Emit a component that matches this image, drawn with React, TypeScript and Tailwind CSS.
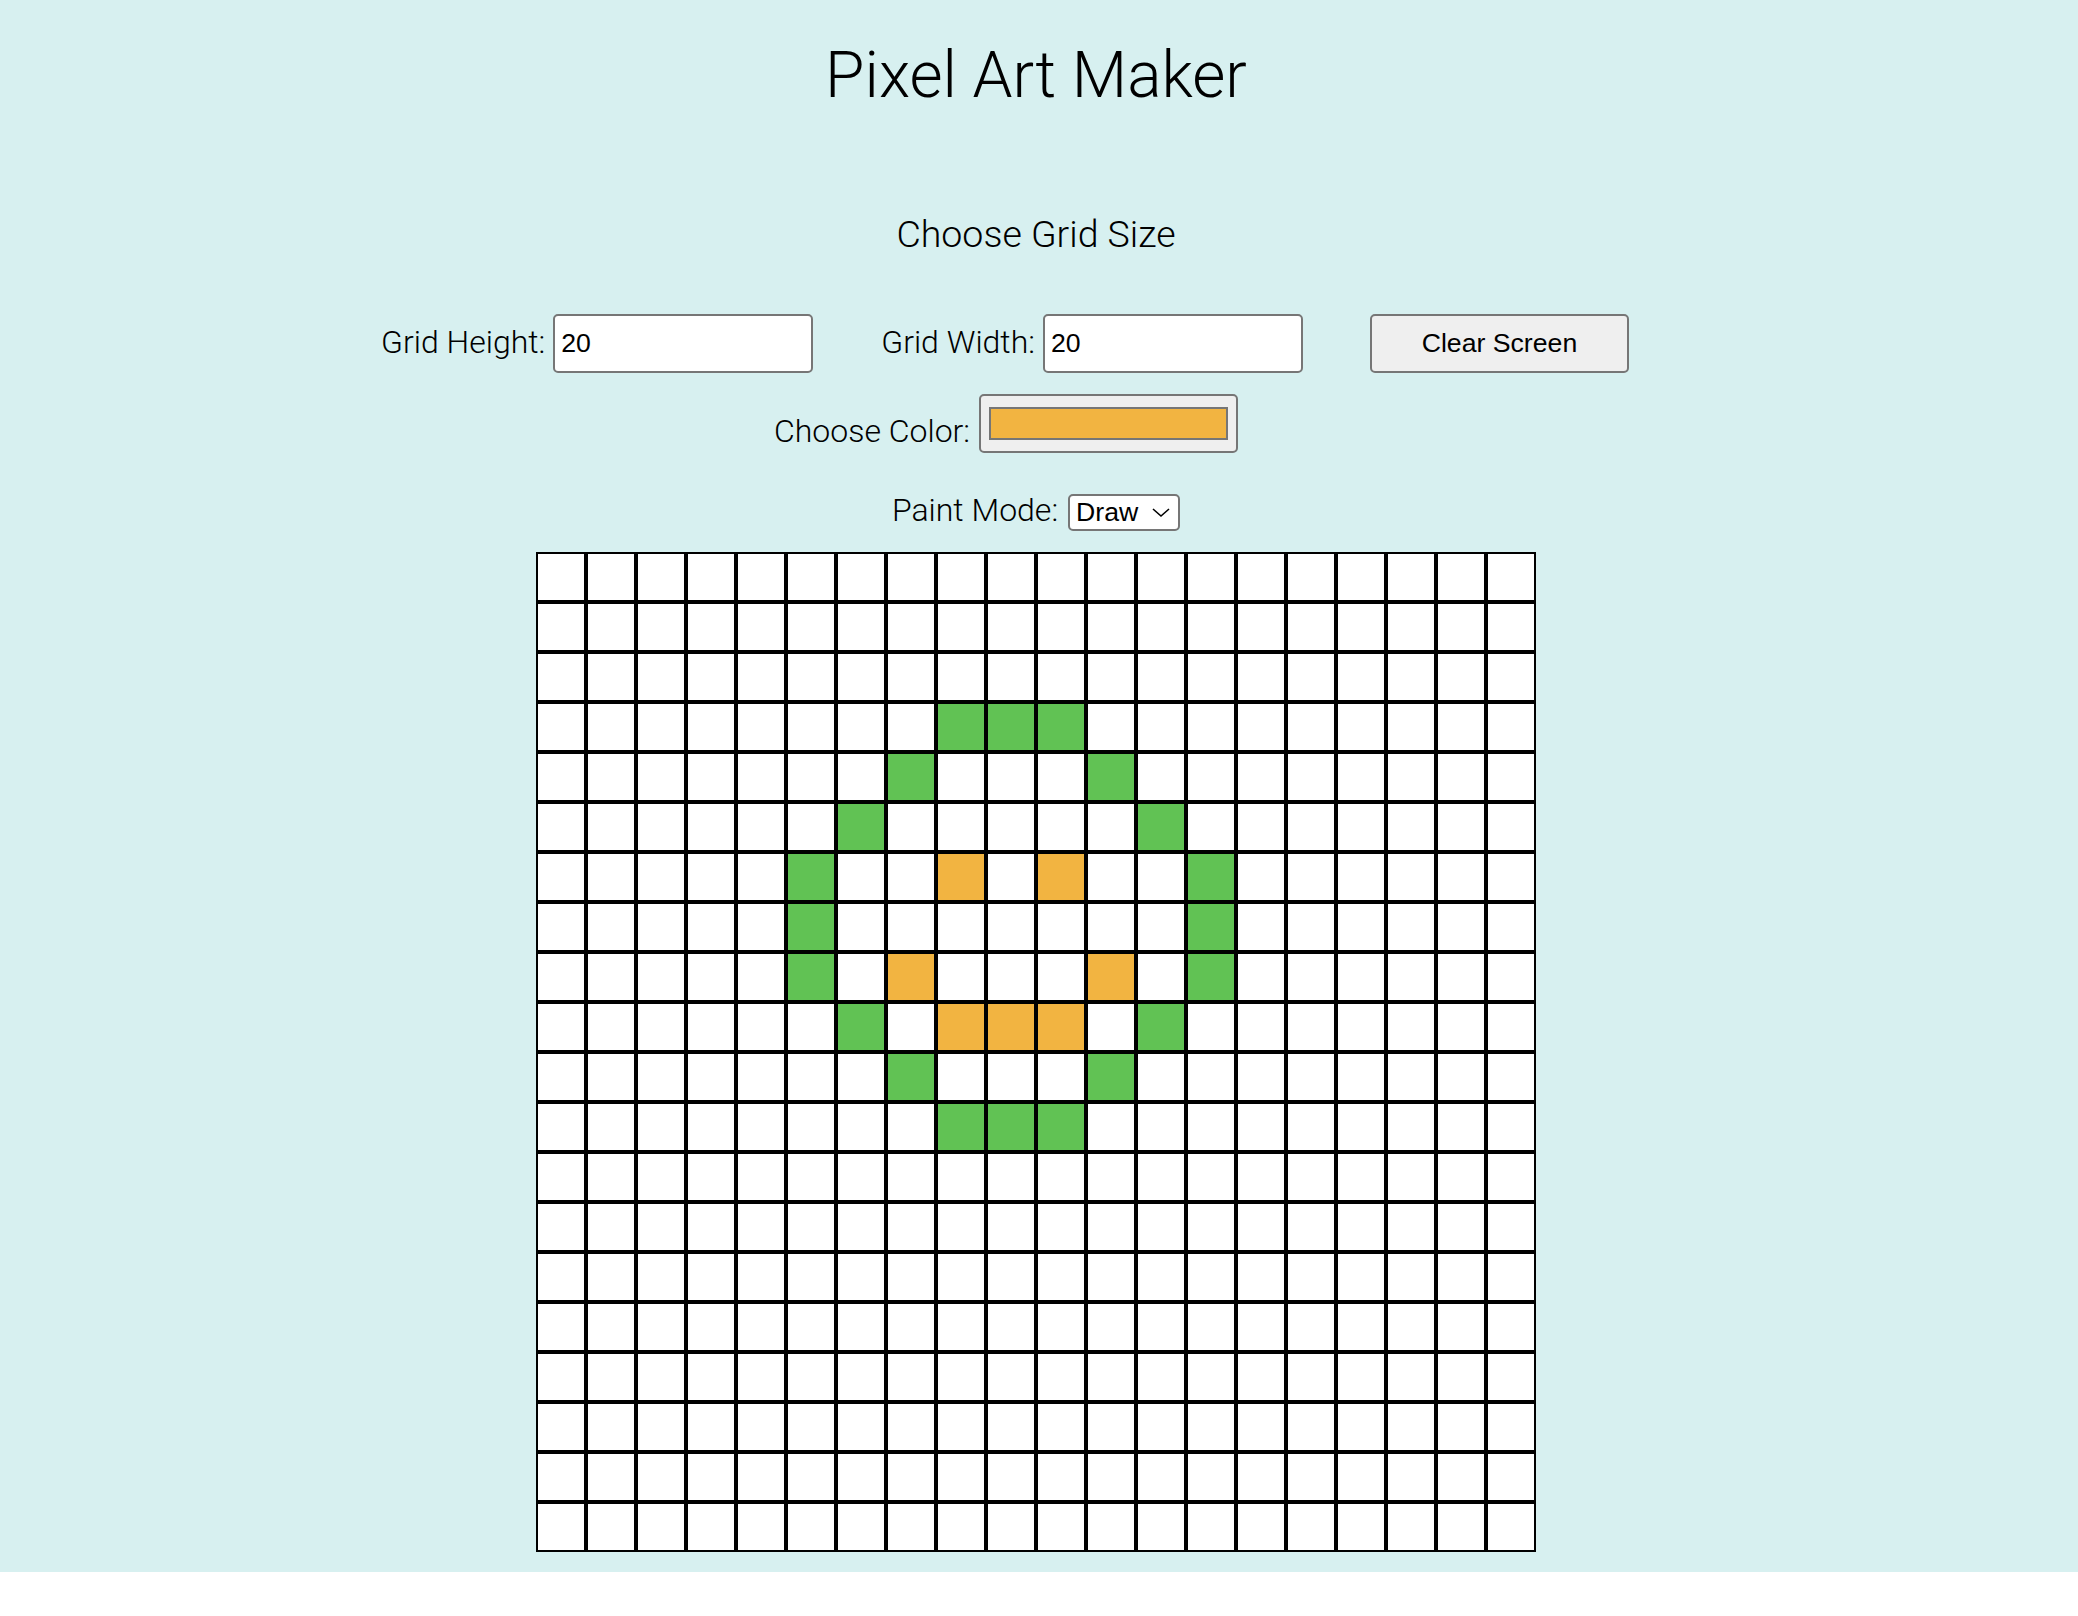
import React, { useState } from "react";

const ROWS = 20;
const COLS = 20;

const GREEN = "#61c254";
const ORANGE = "#f2b441";

// smiley drawn on the grid: [row, col, colour]
const painted: [number, number, string][] = [
  [3, 8, GREEN], [3, 9, GREEN], [3, 10, GREEN],
  [4, 7, GREEN], [4, 11, GREEN],
  [5, 6, GREEN], [5, 12, GREEN],
  [6, 5, GREEN], [6, 13, GREEN], [6, 8, ORANGE], [6, 10, ORANGE],
  [7, 5, GREEN], [7, 13, GREEN],
  [8, 5, GREEN], [8, 13, GREEN], [8, 7, ORANGE], [8, 11, ORANGE],
  [9, 6, GREEN], [9, 12, GREEN], [9, 8, ORANGE], [9, 9, ORANGE], [9, 10, ORANGE],
  [10, 7, GREEN], [10, 11, GREEN],
  [11, 8, GREEN], [11, 9, GREEN], [11, 10, GREEN],
];

function initialCells() {
  const cells: string[] = Array(ROWS * COLS).fill("#ffffff");
  painted.forEach(([r, c, col]) => {
    cells[r * COLS + c] = col;
  });
  return cells;
}

export default function App() {
  const [cells, setCells] = useState<string[]>(initialCells);
  const [color] = useState(ORANGE);

  const paint = (i: number) => {
    setCells((prev) => prev.map((c, j) => (j === i ? color : c)));
  };

  return (
    <div className="bg-[#d7f0f0] pr-[6px] pb-[20px] flex flex-col items-center font-['Roboto',sans-serif] font-light text-black">
      {/* Title */}
      <h1 className="mt-[38px] text-[64px] leading-[75px]">Pixel Art Maker</h1>

      <h2 className="mt-[99px] text-[37.5px] leading-[44px]">Choose Grid Size</h2>

      {/* Grid size row */}
      <div className="mt-[58px] flex items-start h-[59px] pr-[62px]">
        <label className="mt-[10px] text-[32px] leading-[37px]">Grid Height:</label>
        <input
          type="number"
          defaultValue={20}
          className="ml-[8px] w-[260px] h-[59px] bg-white border-2 border-[#767676] rounded-[5px] px-[6px] font-['Liberation_Sans',Arial,sans-serif] font-normal text-[26.67px] outline-none [appearance:textfield]"
        />
        <label className="ml-[68px] mt-[10px] text-[32px] leading-[37px]">Grid Width:</label>
        <input
          type="number"
          defaultValue={20}
          className="ml-[8px] w-[260px] h-[59px] bg-white border-2 border-[#767676] rounded-[5px] px-[6px] font-['Liberation_Sans',Arial,sans-serif] font-normal text-[26.67px] outline-none [appearance:textfield]"
        />
        <button
          onClick={() => setCells(Array(ROWS * COLS).fill("#ffffff"))}
          className="ml-[67px] w-[259px] h-[59px] pb-[2px] bg-[#efefef] border-2 border-[#767676] rounded-[5px] font-['Liberation_Sans',Arial,sans-serif] font-normal text-[26.67px]"
        >
          Clear Screen
        </button>
      </div>

      {/* Colour row */}
      <div className="mt-[21px] flex items-start h-[59px] pr-[60px]">
        <label className="mt-[19px] text-[32px] leading-[37px]">Choose Color:</label>
        <div className="ml-[9px] w-[259px] h-[59px] bg-[#efefef] border-2 border-[#767676] rounded-[5px] px-[8px] py-[11px]">
          <div className="w-full h-full border-2 border-[#767676]" style={{ backgroundColor: color }} />
        </div>
      </div>

      {/* Paint mode */}
      <div className="mt-[39px] flex items-start">
        <label className="text-[32px] leading-[37px]">Paint Mode:</label>
        <div className="relative ml-[10px] mt-[2px]">
          <select className="appearance-none w-[112px] h-[37px] bg-white border-2 border-[#767676] rounded-[5px] pl-[6px] font-['Liberation_Sans',Arial,sans-serif] font-normal text-[26.67px] leading-none outline-none">
            <option>Draw</option>
            <option>Erase</option>
          </select>
          <svg
            className="absolute right-[9px] top-[13px] pointer-events-none"
            width="20"
            height="12"
            viewBox="0 0 20 12"
            fill="none"
            stroke="#000"
            strokeWidth="1.6"
          >
            <path d="M2 2l8 7 8-7" />
          </svg>
        </div>
      </div>

      {/* Canvas */}
      <div className="mt-[21px] grid grid-cols-[repeat(20,50px)]">
        {cells.map((c, i) => (
          <div
            key={i}
            onClick={() => paint(i)}
            className="w-[50px] h-[50px] border-2 border-black"
            style={{ backgroundColor: c }}
          />
        ))}
      </div>
    </div>
  );
}
